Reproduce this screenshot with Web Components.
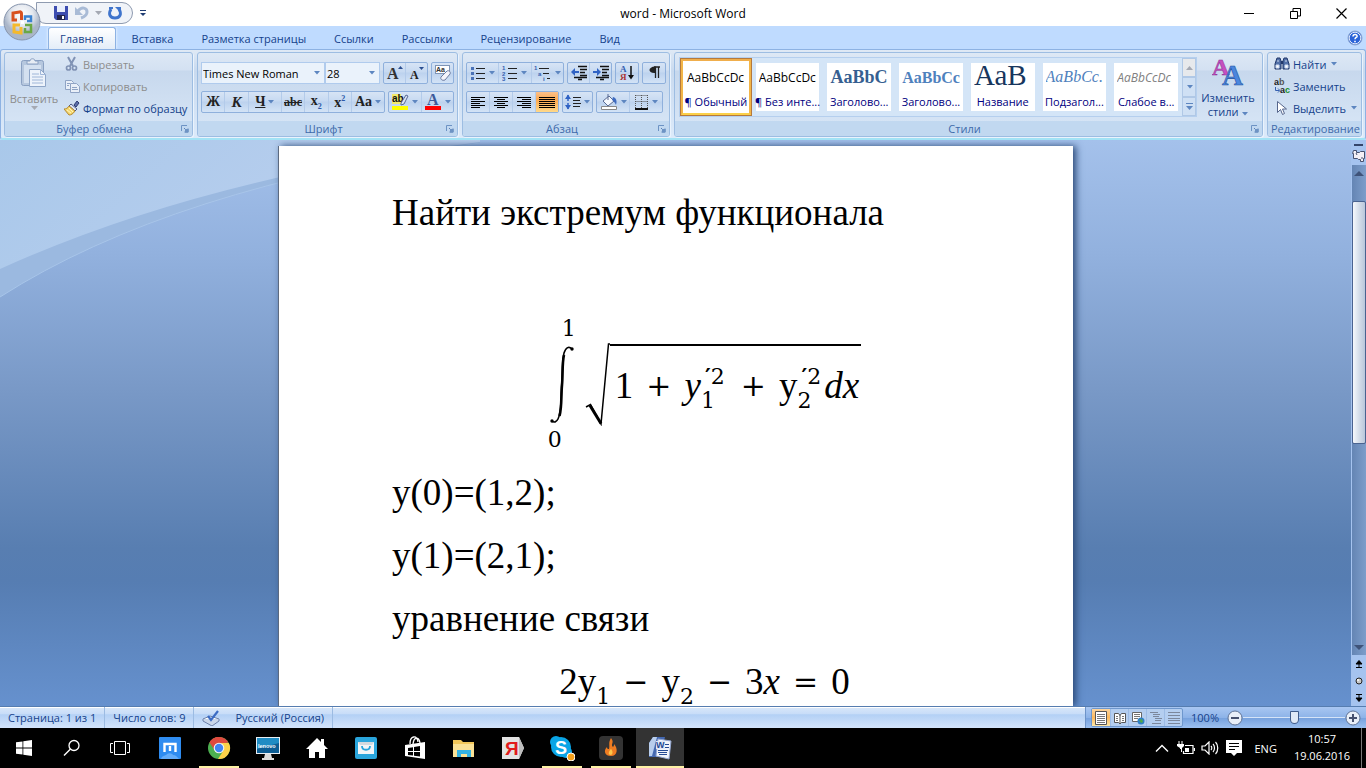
<!DOCTYPE html>
<html lang="ru">
<head>
<meta charset="utf-8">
<title>word - Microsoft Word</title>
<style>
    html, body{
        margin: 0;
        height: 100%;
        overflow: hidden;
    }
    body{
        font-family: "Open Sans", "Noto Sans", sans-serif;
        font-size: 11px;
        color: #15428b;
    }
</style>
</head>
<body>
<word-app></word-app>

<script>
// ---------- icons: [viewBox width, viewBox height, markup] ----------
const LINES = (rows) => rows.map(([x, w], i) => `<path d="M${x} ${i * 2 + 2.5}h${w}" stroke="#000"/>`).join("");

const ICONS = {
    save: [16, 16, `<path d="M1 1h14v14H3l-2-2z" fill="#3d4db0"/><path d="M4 1h8v6H4z" fill="#e8eefc"/><path d="M4 10h8v5H4z" fill="#23264e"/><path d="M9 11h2v3H9z" fill="#fff"/>`],
    undo: [16, 16, `<path d="M4 6c4-5 9-3 9 1 0 3-3 5-6 6" fill="none" stroke="#a9bbd6" stroke-width="3"/><path d="M1 2v8h8z" fill="#a9bbd6"/>`],
    redo: [16, 16, `<path d="M4 4c-3 5-1 9 4 9s7-4 4-9" fill="none" stroke="#3f74cc" stroke-width="3"/><path d="M8 2h6v6z" fill="#3f74cc"/><path d="M2 3h4" stroke="#3f74cc" stroke-width="2"/>`],
    qatMore: [8, 8, `<path d="M1 1.500h6" stroke="#1f3c73"/><path d="M1 4h6l-3 3z" fill="#1f3c73"/>`],
    min: [11, 11, `<path d="M0 5.500h10" stroke="#000"/>`],
    restore: [11, 11, `<path d="M.5 3.500h7v7h-7zM3 3V.5h7.500V8H8" fill="none" stroke="#000"/>`],
    close: [11, 11, `<path d="M.5.5l10 10M10.500.5l-10 10" stroke="#000" stroke-width="1.200"/>`],
    help: [16, 16, `<circle cx="8" cy="8" r="7" fill="#2a63d8" stroke="#8fa7cf"/><circle cx="8" cy="8" r="5.800" fill="none" stroke="#dfe9fb"/><path d="M6 6.500c0-3 4.500-2.500 4 0-.3 1-2 1.200-2 2.800M8 10.700v1.500" fill="none" stroke="#fff" stroke-width="1.600"/>`],
    paste: [28, 32, `<rect x="1.500" y="3.500" width="22" height="25" rx="2" fill="#b6c7de" stroke="#8aa0c2"/><path d="M4 8h17v18H4z" fill="#d4e0f0"/><path d="M7 7V4h3c0-3 5-3 5 0h3v3z" fill="#e7ecf4" stroke="#8aa0c2"/><path d="M9.500 12.500h11l5 5v12h-16z" fill="#edf3fb" stroke="#8fa6c8"/><path d="M20.500 12.500v5h5M12 17h7M12 20h11M12 23h11M12 26h11" fill="none" stroke="#9fb6d8"/>`],
    cut: [16, 16, `<path d="M4 1l5 9M11 1L6 10" stroke="#8193b5" stroke-width="2"/><circle cx="4.500" cy="12" r="2" fill="none" stroke="#8193b5" stroke-width="1.700"/><circle cx="10.500" cy="12" r="2" fill="none" stroke="#8193b5" stroke-width="1.700"/>`],
    copy: [16, 16, `<path d="M1.500 2.500h6l2 2v7h-8z" fill="#e9eff8" stroke="#8fa3c4"/><path d="M6.500 5.500h6l3 3v6h-9z" fill="#e9eff8" stroke="#8fa3c4"/><path d="M3 5.500h3M3 7.500h2M8 9.500h5M8 11.500h6" stroke="#8fa3c4"/>`],
    brush: [16, 16, `<path d="M10 5l3-4 2 2-3 4z" fill="#5d6fa8" stroke="#2d3c75"/><path d="M7 4l6 5-2 2-6-5z" fill="#dfe5f2" stroke="#4a5887"/><path d="M5 6l6 5c-2 3-4 4-6 4L0 9c2 0 4-1 5-3z" fill="#f4d66e" stroke="#b48a33"/><path d="M3 10l4 3M5 8l4 4" stroke="#fff5c0"/>`],
    launcher: [8, 8, `<path d="M.5 6V.5H6" fill="none" stroke="#6d93c4"/><path d="M3 3l4 4M7 3.500V7H3.500" stroke="#5a7fb5" fill="none"/><path d="M4 4h3.500v3.500H4z" fill="#6d93c4"/>`],
    grow: [18, 16, `<text x="1" y="14" font-family="Liberation Serif" font-weight="bold" font-size="16" fill="#333">A</text><path d="M12 4h5l-2.500-3z" fill="#2c4f91"/>`],
    shrink: [18, 16, `<text x="2" y="14" font-family="Liberation Serif" font-weight="bold" font-size="12" fill="#222">A</text><path d="M11 2h5l-2.500 3z" fill="#2c4f91"/>`],
    clear: [18, 18, `<rect x="1.500" y="1.500" width="14" height="8" fill="#fff" stroke="#7e94b5"/><text x="2" y="8" font-family="Liberation Sans" font-size="7" font-weight="bold" fill="#333">Aa</text><path d="M7 13l6-6c2-1 4 1 3 3l-5 6c-3 1-5-1-4-3z" fill="#f4f4fb" stroke="#6c7ba0"/>`],
    mark: [18, 18, `<path d="M1 1h9v10H1z" fill="#f3ea6a"/><text x="1" y="9" font-family="Liberation Sans" font-size="10" fill="#111">ab</text><path d="M10 10l5-8 2 1-4 8-3 1z" fill="#dbe3f4" stroke="#596a93"/><path d="M1 13h16v4H1z" fill="#ffff00"/>`],
    color: [18, 18, `<text x="3" y="12" font-family="Liberation Serif" font-weight="bold" font-size="16" fill="#3c5a9a">A</text><path d="M1 13h16v4H1z" fill="#f00"/>`],
    bullets: [16, 16, `<path d="M1 2h3v3H1zM1 7h3v3H1zM1 12h3v3H1z" fill="#4a72b8"/><path d="M6 3.500h9M6 8.500h9M6 13.500h9" stroke="#222"/>`],
    numbers: [16, 16, `<g font-family="Liberation Sans" font-size="6" font-weight="bold" fill="#3560b0"><text x="0" y="5">1</text><text x="0" y="11">2</text><text x="0" y="16">3</text></g><path d="M6 3.500h9M6 8.500h9M6 13.500h9" stroke="#222"/>`],
    multi: [18, 16, `<g font-family="Liberation Sans" font-size="6" font-weight="bold" fill="#3560b0"><text x="0" y="5">1</text><text x="4" y="11">a</text><text x="9" y="16">i</text></g><path d="M5 3.500h10M9 8.500h6M13 13.500h3" stroke="#222"/>`],
    outdent: [18, 16, `<path d="M8 1.500h9M10 4.500h7M10 7.500h5M10 10.500h7M4 12.500h13M8 14.500h4" stroke="#111" stroke-width="1.500"/><path d="M1 7l4-4v3h4v2H5v3z" fill="#2f62c4"/>`],
    indent: [18, 16, `<path d="M8 1.500h9M10 4.500h7M10 7.500h5M10 10.500h7M4 12.500h13M8 14.500h4" stroke="#111" stroke-width="1.500"/><path d="M9 7L5 3v3H1v2h4v3z" fill="#2f62c4"/>`],
    sort: [16, 16, `<g font-family="Liberation Serif" font-size="9" font-weight="bold"><text x="1" y="7" fill="#3560b0">А</text><text x="1" y="15" fill="#a33">Я</text></g><path d="M12 1v12" stroke="#111" stroke-width="1.500"/><path d="M9 10h6l-3 4.500z" fill="#111"/>`],
    pilcrow: [12, 16, `<path d="M6 2h6M7.500 2v11M10.500 2v11" stroke="#222" stroke-width="1.300"/><path d="M8 1.500C0 1-1 8.500 7 8z" fill="#222"/>`],
    alignL: [16, 14, LINES([[1, 14], [1, 9], [1, 14], [1, 9], [1, 14], [1, 9]])],
    alignC: [16, 14, LINES([[1, 14], [4, 8], [1, 14], [4, 8], [1, 14], [4, 8]])],
    alignR: [16, 14, LINES([[1, 14], [6, 9], [1, 14], [6, 9], [1, 14], [6, 9]])],
    alignJ: [16, 14, LINES([[0, 16], [0, 16], [0, 16], [0, 16], [0, 16], [0, 16]])],
    spacing: [16, 16, `<path d="M3 1v14" stroke="#2f62c4" stroke-width="1.500" stroke-dasharray="6 2"/><path d="M0 5l3-4.500L6 5zM0 11l3 4.500L6 11z" fill="#2f62c4"/><path d="M8 3.500h8M8 6.500h7M8 9.500h8M8 12.500h7" stroke="#222"/>`],
    shade: [18, 18, `<path d="M3 8l6-5 5 5-6 5z" fill="#f5f8fd" stroke="#596a93"/><path d="M8 1v6" stroke="#596a93"/><path d="M13 4c4 1 4 5 3 8-1-2-2-4-4-5z" fill="#3f6cc0"/><path d="M1.500 13.500h15v3h-15z" fill="#fff" stroke="#888"/>`],
    borders: [15, 16, `<path d="M1 14h13v2H1z" fill="#111"/><path d="M1.500 1.500h12M1.500 7.500h12M1.500 1v13M7.500 1v13M13.500 1v13" fill="none" stroke="#555" stroke-dasharray="1 1"/>`],
    styles: [32, 30, `<g font-family="Liberation Serif" font-weight="bold"><text x="0" y="18" font-size="24" fill="#c64fc0" stroke="#8b2f92" stroke-width=".5">A</text><text x="10" y="28" font-size="29" fill="#4b86dd" stroke="#1f4f9f" stroke-width=".6">A</text></g>`],
    find: [16, 16, `<path d="M2 5l1-3h3l1 3v8H1V8zM9 5l1-3h3l1 3 1 3v5H9z" fill="#5270a8" stroke="#22386b"/><path d="M7 5h2v3H7z" fill="#22386b"/><path d="M2 9h3v3H2zM11 9h3v3h-3zM4 4v2M12 4v2" fill="#fff" stroke="#cdd9ef"/>`],
    replace: [18, 16, `<g font-family="Liberation Sans" font-weight="bold" font-size="9"><text x="0" y="7" fill="#222">a<tspan fill="#555">b</tspan></text><text x="6" y="15" fill="#222">a<tspan fill="#1a8f2a">c</tspan></text></g><path d="M1.500 9v3.500h4M4 10.500l2 2-2 2" fill="none" stroke="#3560b0"/>`],
    select: [14, 16, `<path d="M3.500 1.500v11l3-3 2 5 2-1-2-4.500h4z" fill="#fff" stroke="#56668c"/>`],
    up: [7, 4, `<path d="M0 4h7L3.500 0z" fill="#a5a9b3"/>`],
    off: [7, 4, `<path d="M0 0h7L3.500 4z" fill="#a5a9b3"/>`],
    down: [7, 4, `<path d="M1 0h6L4 3.500z" fill="#5d86c0"/>`],
    more: [9, 8, `<path d="M1 1.500h7" stroke="#5d86c0"/><path d="M1 4h7L4.500 8z" fill="#5d86c0"/>`],
    sbUp: [10, 5, `<path d="M0 5h10L5 0z" fill="#3f5379"/>`],
    sbDown: [10, 5, `<path d="M0 0h10L5 5z" fill="#3f5379"/>`],
    ruler: [14, 14, `<path d="M1.500 1.500h3v2h3l1-1h4v7h-1v3h-3v-2h-2l-1-1h-4v-5h-1z" fill="#f4f0f6" stroke="#47516e"/><path d="M4 4l1 2M9 9h2" stroke="#47516e"/>`],
    prev: [8, 8, `<path d="M1 4l3-3.500L7 4zM1 7.500h6M4 4v4" fill="#000" stroke="#000"/>`],
    ball: [10, 10, `<circle cx="5" cy="5" r="3" fill="#c9c9c9" stroke="#222"/><circle cx="4" cy="4" r="1" fill="#fff"/>`],
    next: [8, 8, `<path d="M1 4l3 3.500L7 4zM1 .5h6M4 0v4" fill="#000" stroke="#000"/>`],
    proof: [18, 16, `<path d="M1 9l7-3 9 3-7 5z" fill="#fff" stroke="#6b7fa8"/><path d="M1 9v2l9 5 7-5V9" fill="#c9d6ea" stroke="#6b7fa8"/><path d="M6 6l3 4 7-9" fill="none" stroke="#3c6cc4" stroke-width="2.200"/>`],
    vPrint: [14, 14, `<path d="M1.500.5h11v13h-11z" fill="#fff" stroke="#555"/><path d="M3 3.500h8M3 5.500h8M3 7.500h8M3 9.500h8M3 11.500h8" stroke="#777"/>`],
    vRead: [14, 14, `<path d="M1.500 2.500h4l1.500 2 1.500-2h4v9h-4L7 13l-1.500-1.500h-4zM7 4v9" fill="#fff" stroke="#555"/><path d="M3 5.500h2M3 7.500h2M3 9.500h2M9 5.500h2M9 7.500h2M9 9.500h2" stroke="#777"/>`],
    vWeb: [14, 14, `<path d="M1.500 1.500h9v9h-9z" fill="#fff" stroke="#666"/><path d="M3 3.500h6M3 5.500h6M3 7.500h4" stroke="#777"/><circle cx="10" cy="10" r="3.500" fill="#2f7fc8"/><path d="M8 9l3-1 1 3-2 1z" fill="#4fa84a"/>`],
    vOutline: [14, 14, `<path d="M1 1.500h8M4 3.500h7M4 5.500h6M6 7.500h7M6 9.500h6M3 12.500h9" stroke="#7b879c"/>`],
    vDraft: [14, 14, `<path d="M1 1.500h12M1 4.500h12M1 7.500h12M1 9.500h12M1 12.500h12" stroke="#7b879c"/>`],
    minus: [16, 16, `<circle cx="8" cy="8" r="7" fill="#e9eff8" stroke="#5f7396"/><path d="M4 8h8" stroke="#47516e" stroke-width="2"/>`],
    plus: [16, 16, `<circle cx="8" cy="8" r="7" fill="#e9eff8" stroke="#5f7396"/><path d="M4 8h8M8 4v8" stroke="#47516e" stroke-width="2"/>`],
    office: [38, 38, `<defs><radialGradient id="g" cy=".3"><stop offset="0" stop-color="#fff"/><stop offset=".6" stop-color="#e4e8ef"/><stop offset="1" stop-color="#aab6c9"/></radialGradient></defs><circle cx="19" cy="19" r="18" fill="url(#g)" stroke="#8795ad"/><g fill="none" stroke-width="3"><path d="M18.500 17V10.500c0-1-1-2-2-1.500L10 10v7h4" stroke="#d8501f"/><path d="M22 17v-3.500h6V18h-4" stroke="#3b82d0" stroke-width="2.500"/><path d="M17 22h-6v7l7 1v-6" stroke="#f5b92c"/><path d="M22 22h6v7h-6v-4" stroke="#6aa844" stroke-width="2.500"/></g><path d="M18 18h3v3h-3z" fill="#fff"/>`],
    win: [16, 16, `<path d="M0 2.300l6.500-.9v6.200H0zM7.300 1.300L16 0v7.600H7.300zM0 8.400h6.500v6.200L0 13.700zM7.300 8.400H16V16l-8.700-1.300z" fill="#fff"/>`],
    search: [18, 18, `<circle cx="11" cy="6.500" r="5" fill="none" stroke="#fff" stroke-width="1.300"/><path d="M7.500 10L1 16.500" stroke="#fff" stroke-width="1.500"/>`],
    tasks: [20, 16, `<path d="M4.500 1.500h11v13h-11zM3 3.500H.5v9H3M17 3.500h2.500v9H17" fill="none" stroke="#fff"/>`],
    maxthon: [22, 24, `<rect y="1" width="22" height="22" rx="1" fill="#2f8cf0"/><path d="M2 23c1-4 5-3 6-5 3-2 6 0 6 1 3 0 4 2 6 4z" fill="#64adfa"/><path d="M5.500 16V8h11v8M11 10v5" fill="none" stroke="#fff" stroke-width="2.400"/>`],
    chrome: [24, 24, `<circle cx="12" cy="12" r="11" fill="#4caf50"/><path d="M2.500 6.500A11 11 0 0 1 21.500 6.500L12 8z" fill="#e04a3f"/><path d="M2.500 6.500A11 11 0 0 1 12 1v6.500L7.500 14z" fill="#e04a3f"/><path d="M21.800 7A11 11 0 0 1 11 23l5.500-8.500L14 7z" fill="#fdd24a"/><circle cx="12" cy="12" r="5.300" fill="#f4f4f4"/><circle cx="12" cy="12" r="4.200" fill="#4285f4"/>`],
    lenovo: [24, 24, `<path d="M0 1h24v17H0z" fill="#e8eef3"/><path d="M1 2h22v15H1z" fill="#0c5d94"/><path d="M1 2h22v5L1 13z" fill="#1f8cc4"/><text x="2" y="12" font-family="Liberation Sans" font-weight="bold" font-size="5.500" fill="#fff">lenovo</text><path d="M9 18h6l1 4h2v2H6v-2h2z" fill="#dcdcdc"/>`],
    home: [24, 22, `<path d="M12 1L1 12h3v9h6v-6h4v6h6v-9h3l-4-4V2h-3v3z" fill="#fff"/>`],
    bag: [22, 24, `<rect y="1" width="22" height="22" rx="2" fill="#2aa5dc"/><path d="M3 6h16v12H3z" fill="#f3f5f7"/><path d="M3 6h16l-2 3H5z" fill="#d4d9de"/><path d="M7 10c0 5 8 5 8 0" fill="none" stroke="#2aa5dc" stroke-width="1.800"/>`],
    store: [22, 24, `<path d="M1 9l20-3v17L1 20z" fill="#fff"/><path d="M6 8c0-9 7-9 8-2M9 8c1-8 6-7 7-1" fill="none" stroke="#fff" stroke-width="1.300"/><path d="M4 12l5-.7V15H4zM10 11l6-.9V15h-6zM4 16h5v3.500l-5-.5zM10 16h6v4.500l-6-.8z" fill="#000"/>`],
    folder: [24, 20, `<path d="M1 2h8l2 2h11v15H1z" fill="#f2c75a"/><path d="M1 6h21v13H1z" fill="#fbe296"/><path d="M5 19v-7h14v7h-4v-3h-6v3z" fill="#35b3e3"/>`],
    yandex: [24, 24, `<path d="M1 1h17l5 11-5 11H1z" fill="#e3e3e3"/><path d="M18 1l5 11-5 11z" fill="#bdbdbd"/><text x="4" y="19" font-family="Liberation Sans" font-weight="bold" font-size="19" fill="#e11b1b">Я</text>`],
    skype: [26, 26, `<circle cx="7" cy="7" r="6" fill="#0aa5e6"/><circle cx="17" cy="17" r="6" fill="#0aa5e6"/><circle cx="12" cy="12" r="10" fill="#0aa5e6"/><text x="6" y="19" font-family="Liberation Sans" font-weight="bold" font-size="18" fill="#fff">S</text><circle cx="22" cy="22" r="4" fill="#f6a01a" stroke="#fff"/>`],
    fire: [24, 24, `<rect width="24" height="24" rx="4" fill="#333"/><path d="M12 2c4 5-1 6 2 9 1-1 1-2 1-3 4 4 4 12-3 12-6 0-8-5-4-9 0 2 1 2 2 2 1-4-1-6 2-11z" fill="#ee7c22"/><path d="M12 13c2 2 2 5 0 6-3 0-3-3 0-6z" fill="#fcc64a"/>`],
    word: [24, 24, `<path d="M5 1h12L12 21H1V7z" fill="#4468b0"/><path d="M5 1h4L4 20H1V7z" fill="#b8cdec"/><path d="M10 3l13 2-2 18-13-3z" fill="#f1f4fb" stroke="#93a6cf"/><path d="M8 5h9v8H8z" fill="#dfe7f6"/><text x="8" y="12" font-family="Liberation Sans" font-weight="bold" font-size="9" fill="#254a94">W</text><path d="M10 14.500h10M10 16.500h9M11 18.500h8M17 8.500h4M17 11.500h4" stroke="#254a94"/>`],
    trayUp: [14, 8, `<path d="M1 7.500l6-6 6 6" fill="none" stroke="#fff" stroke-width="1.400"/>`],
    battery: [18, 14, `<path d="M8 4.500h8v8H6.500V10M17.500 7v3" fill="none" stroke="#fff" stroke-width="1.200"/><path d="M8 7h4v4H8z" fill="#fff"/><path d="M2 0v3M5 0v3" stroke="#fff"/><path d="M0 3h7v2L5 7v4H4V8H3V7L0 5z" fill="#fff"/>`],
    sound: [18, 14, `<path d="M1 5h3l4-4v12L4 9H1z" fill="none" stroke="#fff" stroke-width="1.200"/><path d="M10 5c1 1 1 3 0 4M12 3c2 2 2 6 0 8M14.500 1c3 3 3 9 0 12" fill="none" stroke="#fff" stroke-width="1.200"/>`],
    note: [16, 16, `<path d="M0 0h16v13h-5l-3 3-3-3H0z" fill="#fff"/><path d="M3 3.500h10M3 6.500h10M3 9.500h6" stroke="#000"/>`],
    integral: [24, 80, `<path d="M22 4c-3-3-6-2-8 4-1 4-1.500 8-1.500 14L11 56c-.3 8-1 14-3 18-1.500 3-4 4-6 2" fill="none" stroke="#000" stroke-width="1.600"/><path d="M14 10c-2 8-1 20-2 30s0 22-2.500 31" fill="none" stroke="#000" stroke-width="2.600"/><circle cx="22" cy="4" r="1.700"/><circle cx="2" cy="76" r="1.700"/>`],
    radical: [25, 83, `<path d="M1 64l4.500-2.500L16 81 23.500 1H25" fill="none" stroke="#000" stroke-width="1.500"/><path d="M5 62.500l11 18" stroke="#000" stroke-width="3"/>`],
};

class UiIcon extends HTMLElement{
    constructor(){
        super();
        this.attachShadow({mode: "open"});
    }

    connectedCallback(){
        const [w, h, markup] = ICONS[this.getAttribute("name")];
        this.shadowRoot.innerHTML = `
        <style>
        :host{ display: inline-flex; flex: none; }
        svg{ display: block; }
        </style>
        <svg width="${w}" height="${h}" viewBox="0 0 ${w} ${h}" aria-hidden="true">${markup}</svg>
        `;
    }
}

// one segment of a button strip; "drop" adds the small arrow, "on" is the pressed look
class ToolButton extends HTMLElement{
    constructor(){
        super();
        this.attachShadow({mode: "open"});
    }

    connectedCallback(){
        const icon = this.getAttribute("icon");
        this.shadowRoot.innerHTML = `
        <style>
        :host{ display: flex; flex: 1 1 23px; }
        :host([drop]){ flex-basis: 33px; }
        :host(:not(:first-child)){ border-left: 1px solid #b3cbea; }
        :host([on]) button{ background: linear-gradient(#fbc08a, #fda94f 40%, #ffd98a); }
        button{
            display: flex;
            flex: 1;
            align-items: center;
            justify-content: center;
            gap: 2px;
            border: 0;
            padding: 0;
            background: none;
            color: #222;
            font: bold 14px "Liberation Serif", serif;
        }
        ::slotted(i){ font-size: 15px; }
        </style>
        <button type="button" aria-label="${this.getAttribute("label")}">
            ${icon ? `<ui-icon name="${icon}"></ui-icon>` : `<span><slot></slot></span>`}
            ${this.hasAttribute("drop") ? `<ui-icon name="down"></ui-icon>` : ""}
        </button>
        `;
    }
}

class ToolStrip extends HTMLElement{
    constructor(){
        super();
        this.attachShadow({mode: "open"}).innerHTML = `
        <style>
        :host{
            display: flex;
            box-sizing: border-box;
            height: 22px;
            border: 1px solid #8fb0dc;
            border-radius: 2px;
            background: linear-gradient(#d7e4f5, #c6d9f1 45%, #bcd2ee 50%, #d3e3f6);
        }
        </style>
        <slot></slot>
        `;
    }
}

// icon + caption in one line, used in the first and the last group
class SmallCommand extends HTMLElement{
    constructor(){
        super();
        this.attachShadow({mode: "open"});
    }

    connectedCallback(){
        const off = this.hasAttribute("off");
        this.shadowRoot.innerHTML = `
        <style>
        :host{ display: flex; height: 22px; }
        button{
            display: flex;
            align-items: center;
            border: 0;
            padding: 0;
            background: none;
            color: ${off ? "#8d8d8d" : "#15428b"};
            font: inherit;
            white-space: nowrap;
        }
        .ico{ display: flex; width: 19px; }
        .arrow{ margin-left: 4px; }
        </style>
        <button type="button" ${off ? "disabled" : ""}>
            <span class="ico"><ui-icon name="${this.getAttribute("icon")}"></ui-icon></span>
            <slot></slot>
            ${this.hasAttribute("drop") ? `<ui-icon class="arrow" name="down"></ui-icon>` : ""}
        </button>
        `;
    }
}

class RibbonGroup extends HTMLElement{
    constructor(){
        super();
        this.attachShadow({mode: "open"});
    }

    connectedCallback(){
        this.shadowRoot.innerHTML = `
        <style>
        :host{
            display: flex;
            flex-direction: column;
            box-sizing: border-box;
            height: 85px;
            border: 1px solid #9dbde2;
            border-radius: 3px;
            box-shadow: 1px 1px 0 #eaf3fd;
            background: linear-gradient(#dde8f5, #d4e1f2 20%, #c7d8ed 22%, #d9e7f7 100%);
            overflow: hidden;
        }
        .body{ display: flex; flex: 1; padding: 0 3px; min-height: 0; }
        .caption{
            display: flex;
            align-items: center;
            height: 15px;
            background: #c1d8f0;
            color: #3e6aaa;
            padding: 0 3px;
            white-space: nowrap;
        }
        .caption span{ flex: 1; text-align: center; line-height: 15px; }
        </style>
        <div class="body"><slot></slot></div>
        <div class="caption"><span>${this.getAttribute("caption")}</span>${this.hasAttribute("launcher") ? `<ui-icon name="launcher"></ui-icon>` : ""}</div>
        `;
    }
}

class StyleCard extends HTMLElement{
    constructor(){
        super();
        this.attachShadow({mode: "open"});
    }

    connectedCallback(){
        this.shadowRoot.innerHTML = `
        <style>
        :host{ display: flex; flex: 1 1 72px; min-width: 0; }
        button{
            display: flex;
            flex: 1;
            flex-direction: column;
            align-items: center;
            justify-content: center;
            min-width: 0;
            margin: 0;
            border: 3px solid transparent;
            padding: 2px 1px;
            background: #fff content-box;
            color: #000080;
            font: inherit;
        }
        :host([on]) button{ border-color: #f0ae4c #f2b548 #fbd048; background-clip: padding-box; outline: 1px solid #b5793c; outline-offset: -1px; }
        .sample{
            display: flex;
            align-items: center;
            box-sizing: border-box;
            width: 100%;
            height: 30px;
            padding: 0 3px;
            color: #000;
        }
        .clip{ overflow: hidden; white-space: nowrap; line-height: 28px; }
        .name{ height: 18px; line-height: 17px; white-space: nowrap; }
        </style>
        <button type="button">
            <span class="sample"><span class="clip"><slot></slot></span></span>
            <span class="name">${this.getAttribute("name")}</span>
        </button>
        `;
    }
}

class TitleBar extends HTMLElement{
    constructor(){
        super();
        this.attachShadow({mode: "open"}).innerHTML = `
        <style>
        :host{
            display: grid;
            grid-template-columns: 1fr auto 1fr;
            align-items: center;
            height: 26px;
            background: #fff;
            position: relative;
        }
        button{ border: 0; padding: 0; background: none; display: flex; align-items: center; justify-content: center; }
        .left{ display: flex; align-items: center; gap: 6px; padding-left: 36px; }
        .qat{
            display: flex;
            align-items: center;
            box-sizing: border-box;
            width: 97px;
            height: 22px;
            padding-left: 16px;
            gap: 5px;
            border: 1px solid #8f9bb0;
            border-radius: 0 11px 11px 10px;
            background: #f0f3f8;
        }
        .title{ color: #000; font-size: 12px; }
        .win{ display: flex; justify-content: flex-end; padding-right: 2px; }
        .win button{ width: 46px; height: 24px; }
        /* the round button hangs over the tab row */
        .office{ position: absolute; left: 3px; top: 3px; z-index: 2; }
        </style>
        <div class="left">
            <div class="qat">
                <button type="button" aria-label="Сохранить"><ui-icon name="save"></ui-icon></button>
                <button type="button" aria-label="Отменить"><ui-icon name="undo"></ui-icon></button>
                <ui-icon name="off"></ui-icon>
                <button type="button" aria-label="Повторить"><ui-icon name="redo"></ui-icon></button>
            </div>
            <button type="button" aria-label="Настройка панели"><ui-icon name="qatMore"></ui-icon></button>
        </div>
        <div class="title">word - Microsoft Word</div>
        <div class="win">
            <button type="button" aria-label="Свернуть"><ui-icon name="min"></ui-icon></button>
            <button type="button" aria-label="Восстановить"><ui-icon name="restore"></ui-icon></button>
            <button type="button" aria-label="Закрыть"><ui-icon name="close"></ui-icon></button>
        </div>
        <button type="button" class="office" aria-label="Office"><ui-icon name="office"></ui-icon></button>
        `;
    }
}

class RibbonTabs extends HTMLElement{
    tabs = ["Главная", "Вставка", "Разметка страницы", "Ссылки", "Рассылки", "Рецензирование", "Вид"];

    constructor(){
        super();
        this.attachShadow({mode: "open"});
    }

    connectedCallback(){
        this.shadowRoot.innerHTML = `
        <style>
        :host{
            display: flex;
            align-items: flex-end;
            height: 23px;
            padding: 0 3px 0 48px;
            background: #bfdbff;
        }
        nav{ display: flex; flex: 1; gap: 4px; }
        button{
            box-sizing: border-box;
            height: 22px;
            border: 1px solid transparent;
            border-bottom: 0;
            border-radius: 3px 3px 0 0;
            padding: 0 11px;
            background: none;
            color: #15428b;
            font: inherit;
            line-height: 21px;
        }
        .on{ border-color: #8db2e3; background: linear-gradient(#fff, #e3edf8); box-shadow: 0 0 3px #fff; }
        .help{ padding: 0; border: 0; display: flex; align-items: center; }
        </style>
        <nav>${this.tabs.map((t, i) => `<button type="button" class="${i ? "" : "on"}">${t}</button>`).join("")}</nav>
        <button type="button" class="help" aria-label="Справка"><ui-icon name="help"></ui-icon></button>
        `;
    }
}

class WordRibbon extends HTMLElement{
    constructor(){
        super();
        this.attachShadow({mode: "open"}).innerHTML = `
        <style>
        :host{
            display: flex;
            gap: 4px;
            box-sizing: border-box;
            height: 91px;
            padding: 2px 3px;
            border: 1px solid #8db2e3;
            border-bottom: 2px solid #a3e3f5;
            border-radius: 3px;
            background: linear-gradient(#dfe9f5, #c9daef 24%, #dceafa);
        }
        .clip{ flex: 0 0 189px; }
        .font{ flex: 0 0 261px; }
        .para{ flex: 0 0 208px; }
        .styles{ flex: 1; min-width: 0; }
        .edit{ flex: 0 0 95px; }
        .rows{ display: flex; flex: 1; flex-direction: column; justify-content: center; gap: 7px; padding-top: 1px; }
        .row{ display: flex; gap: 3px; }
        .list{ display: flex; flex-direction: column; }
        .big{
            display: flex;
            flex-direction: column;
            align-items: center;
            border: 0;
            padding: 4px 0 0;
            background: none;
            color: #15428b;
            font: inherit;
            line-height: 14px;
        }
        .big:disabled{ color: #8d8d8d; }
        .paste{ width: 52px; margin-right: 4px; }
        .paste ui-icon:first-child{ margin-bottom: 3px; }
        .change{ flex: 0 0 62px; }
        .change ui-icon:first-child{ margin-bottom: 4px; }
        .combo{
            display: flex;
            align-items: center;
            box-sizing: border-box;
            height: 22px;
            border: 1px solid #b0cbed;
            padding: 0 4px 0 1px;
            background: #eaf2fb;
        }
        .face{ flex: 0 0 124px; }
        .size{ flex: 0 0 55px; margin-left: -3px; }
        select{
            appearance: none;
            flex: 1;
            min-width: 0;
            border: 0;
            padding: 0;
            background: none;
            color: #000;
            font: inherit;
        }
        .aa{ flex: 0 0 45px; }
        .one{ flex: 1 1 24px; }
        .gallery{
            display: flex;
            flex: 1;
            min-width: 0;
            box-sizing: border-box;
            height: 60px;
            margin: 4px 0 0 1px;
            border: 1px solid #b5cfee;
            background: #d4e5f7;
        }
        .scroll{ display: flex; flex-direction: column; flex: none; width: 14px; }
        .scroll button{
            display: flex;
            flex: 1;
            align-items: center;
            justify-content: center;
            border: 1px solid #b0c8e6;
            padding: 0;
            background: #cfe0f4;
        }
        .scroll button:first-child{ background: #e7e9ec; }
        .edit .list{ padding-left: 3px; }
        .plain{ font-size: 12px; }
        .cambria{ font-family: "Liberation Serif", serif; font-weight: bold; font-size: 18px; color: #365f91; }
        .h2{ font-size: 16px; color: #4f81bd; }
        .ttl{ font: 29px "Liberation Serif", serif; line-height: 28px; color: #17365d; }
        .sub{ font: italic 16px "Liberation Serif", serif; color: #4f81bd; }
        .weak{ font-size: 12px; font-style: italic; color: #808080; }
        small{ font-size: 8px; color: #2c58a8; vertical-align: sub; }
        small.sup{ vertical-align: super; }
        s{ font-size: 12px; }
        </style>

        <ribbon-group class="clip" caption="Буфер обмена" launcher>
            <button type="button" class="big paste" disabled>
                <ui-icon name="paste"></ui-icon>Вставить<ui-icon name="off"></ui-icon>
            </button>
            <div class="list">
                <small-command icon="cut" off>Вырезать</small-command>
                <small-command icon="copy" off>Копировать</small-command>
                <small-command icon="brush">Формат по образцу</small-command>
            </div>
        </ribbon-group>

        <ribbon-group class="font" caption="Шрифт" launcher>
            <div class="rows">
                <div class="row">
                    <span class="combo face"><select aria-label="Шрифт"><option>Times New Roman</option></select><ui-icon name="down"></ui-icon></span>
                    <span class="combo size"><select aria-label="Размер"><option>28</option></select><ui-icon name="down"></ui-icon></span>
                    <tool-strip class="aa">
                        <tool-button icon="grow" label="Увеличить"></tool-button>
                        <tool-button icon="shrink" label="Уменьшить"></tool-button>
                    </tool-strip>
                    <tool-strip class="one"><tool-button icon="clear" label="Очистить формат"></tool-button></tool-strip>
                </div>
                <div class="row">
                    <tool-strip style="flex: 0 0 184px">
                        <tool-button label="Полужирный">Ж</tool-button>
                        <tool-button label="Курсив"><i>К</i></tool-button>
                        <tool-button label="Подчеркнутый" drop><u>Ч</u></tool-button>
                        <tool-button label="Зачеркнутый"><s>abc</s></tool-button>
                        <tool-button label="Подстрочный">x<small>2</small></tool-button>
                        <tool-button label="Надстрочный">x<small class="sup">2</small></tool-button>
                        <tool-button label="Регистр" drop>Aa</tool-button>
                    </tool-strip>
                    <tool-strip class="one">
                        <tool-button icon="mark" label="Выделение" drop></tool-button>
                        <tool-button icon="color" label="Цвет текста" drop></tool-button>
                    </tool-strip>
                </div>
            </div>
        </ribbon-group>

        <ribbon-group class="para" caption="Абзац" launcher>
            <div class="rows">
                <div class="row">
                    <tool-strip style="flex: 0 0 98px">
                        <tool-button icon="bullets" label="Маркеры" drop></tool-button>
                        <tool-button icon="numbers" label="Нумерация" drop></tool-button>
                        <tool-button icon="multi" label="Многоуровневый список" drop></tool-button>
                    </tool-strip>
                    <tool-strip style="flex: 0 0 45px">
                        <tool-button icon="outdent" label="Уменьшить отступ"></tool-button>
                        <tool-button icon="indent" label="Увеличить отступ"></tool-button>
                    </tool-strip>
                    <tool-strip class="one"><tool-button icon="sort" label="Сортировка"></tool-button></tool-strip>
                    <tool-strip class="one"><tool-button icon="pilcrow" label="Знаки абзаца"></tool-button></tool-strip>
                </div>
                <div class="row">
                    <tool-strip style="flex: 0 0 93px">
                        <tool-button icon="alignL" label="По левому краю"></tool-button>
                        <tool-button icon="alignC" label="По центру"></tool-button>
                        <tool-button icon="alignR" label="По правому краю"></tool-button>
                        <tool-button icon="alignJ" label="По ширине" on></tool-button>
                    </tool-strip>
                    <tool-strip style="flex: 0 0 31px"><tool-button icon="spacing" label="Интервал" drop></tool-button></tool-strip>
                    <tool-strip style="flex: 0 0 67px">
                        <tool-button icon="shade" label="Заливка" drop></tool-button>
                        <tool-button icon="borders" label="Границы" drop></tool-button>
                    </tool-strip>
                </div>
            </div>
        </ribbon-group>

        <ribbon-group class="styles" caption="Стили" launcher>
            <div class="gallery">
                <style-card name="¶ Обычный" on><span class="plain">AaBbCcDc</span></style-card>
                <style-card name="¶ Без инте..."><span class="plain">AaBbCcDc</span></style-card>
                <style-card name="Заголово..."><span class="cambria">AaBbC</span></style-card>
                <style-card name="Заголово..."><span class="cambria h2">AaBbCc</span></style-card>
                <style-card name="Название"><span class="ttl">АаВ</span></style-card>
                <style-card name="Подзагол..."><span class="sub">AaBbCc.</span></style-card>
                <style-card name="Слабое в..."><span class="weak">AaBbCcDc</span></style-card>
                <div class="scroll">
                    <button type="button" aria-label="Вверх"><ui-icon name="up"></ui-icon></button>
                    <button type="button" aria-label="Вниз"><ui-icon name="down"></ui-icon></button>
                    <button type="button" aria-label="Все стили"><ui-icon name="more"></ui-icon></button>
                </div>
            </div>
            <button type="button" class="big change">
                <ui-icon name="styles"></ui-icon>Изменить<span>стили <ui-icon name="down"></ui-icon></span>
            </button>
        </ribbon-group>

        <ribbon-group class="edit" caption="Редактирование">
            <div class="list">
                <small-command icon="find" drop>Найти</small-command>
                <small-command icon="replace">Заменить</small-command>
                <small-command icon="select" drop>Выделить</small-command>
            </div>
        </ribbon-group>
        `;
    }
}

class DocPage extends HTMLElement{
    constructor(){
        super();
        this.attachShadow({mode: "open"}).innerHTML = `
        <style>
        :host{
            display: block;
            box-sizing: border-box;
            width: 795px;
            padding: 35px 56px 0 113px;
            border-left: 1px solid #5c6a80;
            background: #fff;
            box-shadow: 3px 0 7px #2c4a78;
            color: #000;
            font: 37px/63px "Liberation Serif", "Times New Roman", serif;
        }
        p{ margin: 0; min-height: 63px; white-space: nowrap; }
        .eq{ display: flex; align-items: center; justify-content: center; white-space: nowrap; }
        .main{ padding: 10px 0 9px; }
        .limits, .idx, sub, .op{ font-family: "DejaVu Serif", serif; font-size: 22px; line-height: 24px; }
        .limits{ display: flex; flex-direction: column; width: 28px; }
        .limits span:first-child{ text-align: right; }
        .limits ui-icon{ align-self: center; margin: 4px 0 3px; }
        .root{ margin-left: 9px; }
        .under{ border-top: 2px solid #000; padding: 0 2px 0 5px; line-height: 79px; }
        .op{ margin: 0 13px; font-size: 30px; vertical-align: 2px; }
        .idx{
            display: inline-flex;
            flex-direction: column;
            vertical-align: 14px;
            margin-right: 3px;
        }
        .idx span:first-child{ padding-left: 4px; }
        sub{ vertical-align: -10px; }
        </style>
        <p>Найти экстремум функционала</p>
        <p></p>
        <div class="eq main">
            <div class="limits"><span>1</span><ui-icon name="integral"></ui-icon><span>0</span></div>
            <ui-icon class="root" name="radical"></ui-icon>
            <div class="under">1<span class="op">+</span><i>y</i><span class="idx"><span><b>′</b>2</span><span>1</span></span><span class="op">+</span>y<span class="idx"><span><b>′</b>2</span><span>2</span></span><i>dx</i></div>
        </div>
        <p>у(0)=(1,2);</p>
        <p>у(1)=(2,1);</p>
        <p>уравнение связи</p>
        <div class="eq"><div>2y<sub>1</sub><span class="op">−</span>y<sub>2</sub><span class="op">−</span>3<i>x</i><span class="op">=</span>0</div></div>
        `;
    }
}

class WorkSpace extends HTMLElement{
    constructor(){
        super();
        this.attachShadow({mode: "open"}).innerHTML = `
        <style>
        :host{ display: flex; flex: 1; min-height: 0; background: #a5c3ef; }
        .desk{
            display: grid;
            flex: 1;
            grid-template: 100% / 100%;
            min-width: 0;
            overflow: hidden;
            background: linear-gradient(#a4c1eb, #92b1de 20%, #7898c6 45%, #587eb1 72%, #567db2 78%, #6691ce);
        }
        .desk > *{ grid-area: 1 / 1; }
        .swoosh{ display: block; }
        doc-page{ justify-self: center; margin-top: 6px; overflow: hidden; }
        .bar{ display: flex; flex-direction: column; align-items: center; width: 15px; padding-top: 4px; box-sizing: border-box; }
        .split{ width: 9px; height: 2px; background: #34456a; }
        .bar button{ display: flex; align-items: center; justify-content: center; width: 14px; border: 0; padding: 0; background: none; }
        .rule{ height: 19px; }
        .track{ display: flex; flex: 1; flex-direction: column; width: 14px; background: linear-gradient(90deg, #6485b4, #7d9dca); }
        .arrow{ height: 16px; }
        .gap{ flex: 20; }
        .thumb{
            flex: 243;
            border: 1px solid #4a6390;
            border-radius: 2px;
            background: linear-gradient(90deg, #f5f8fc, #d5deea 50%, #b9c7db);
        }
        .rest{ flex: 197; }
        .pager{ height: 17px; }
        </style>
        <div class="desk">
            <svg class="swoosh" width="480" height="240" viewBox="0 0 480 240" aria-hidden="true">
                <defs><linearGradient id="s" x2="1" y2=".3"><stop offset="0" stop-color="#a9c8ea"/><stop offset="1" stop-color="#bcd0ef"/></linearGradient></defs>
                <path d="M0 0h480v3Q170 48 0 157z" fill="#9bb9e0"/>
                <path d="M0 0h480v2Q200 38 0 129z" fill="url(#s)"/>
                <path d="M0 157Q170 48 480 3" fill="none" stroke="#a8c5e9"/>
            </svg>
            <doc-page></doc-page>
        </div>
        <div class="bar">
            <span class="split"></span>
            <button type="button" class="rule" aria-label="Линейка"><ui-icon name="ruler"></ui-icon></button>
            <div class="track">
                <button type="button" class="arrow" aria-label="Вверх"><ui-icon name="sbUp"></ui-icon></button>
                <span class="gap"></span><span class="thumb"></span><span class="rest"></span>
                <button type="button" class="arrow" aria-label="Вниз"><ui-icon name="sbDown"></ui-icon></button>
            </div>
            <button type="button" class="pager" aria-label="Предыдущая"><ui-icon name="prev"></ui-icon></button>
            <button type="button" class="pager" aria-label="Объект перехода"><ui-icon name="ball"></ui-icon></button>
            <button type="button" class="pager" aria-label="Следующая"><ui-icon name="next"></ui-icon></button>
        </div>
        `;
    }
}

class StatusBar extends HTMLElement{
    constructor(){
        super();
        this.attachShadow({mode: "open"}).innerHTML = `
        <style>
        :host{
            display: flex;
            box-sizing: border-box;
            height: 22px;
            border-top: 1px solid #567db0;
            background: linear-gradient(#fff 1px, #d7e6f9 1px, #c7dcf8 35%, #b3d0f5 36%, #d3e4fb);
        }
        .cell{ display: flex; align-items: center; gap: 15px; padding: 0 8px; border-right: 1px solid #9cbbe2; }
        .fill{ flex: 1; }
        .right{
            display: flex;
            align-items: center;
            gap: 8px;
            padding: 0 5px;
            border-left: 1px solid #6d93c8;
            background: linear-gradient(#a9c7f2, #8db3e8 50%, #76a1dd 52%, #9cc0f0);
        }
        .views{ display: flex; border: 1px solid #6e97cd; border-radius: 2px; background: #b4cef0; }
        button{ display: flex; align-items: center; justify-content: center; border: 0; padding: 0; background: none; }
        .views button{ width: 18px; height: 17px; }
        .views button + button{ border-left: 1px solid #9dbce6; }
        .views .on{ background: linear-gradient(#fbd5a0, #fdb95c 50%, #ffe9a8); }
        .zoom{ display: flex; align-items: center; }
        input{ appearance: none; width: 102px; height: 16px; margin: 0; background: linear-gradient(#d5e4f8, #d5e4f8) center / 100% 1px no-repeat; }
        input::-webkit-slider-thumb{
            appearance: none;
            width: 9px;
            height: 13px;
            border: 1px solid #3f5c8c;
            border-radius: 1px 1px 5px 5px;
            background: #dfe9f7;
        }
        </style>
        <div class="cell">Страница: 1 из 1</div>
        <div class="cell">Число слов: 9</div>
        <div class="cell"><ui-icon name="proof"></ui-icon>Русский (Россия)</div>
        <div class="fill"></div>
        <div class="right">
            <div class="views">
                <button type="button" class="on" aria-label="Разметка"><ui-icon name="vPrint"></ui-icon></button>
                <button type="button" aria-label="Чтение"><ui-icon name="vRead"></ui-icon></button>
                <button type="button" aria-label="Веб-документ"><ui-icon name="vWeb"></ui-icon></button>
                <button type="button" aria-label="Структура"><ui-icon name="vOutline"></ui-icon></button>
                <button type="button" aria-label="Черновик"><ui-icon name="vDraft"></ui-icon></button>
            </div>
            <span>100%</span>
            <div class="zoom">
                <button type="button" aria-label="Уменьшить"><ui-icon name="minus"></ui-icon></button>
                <input type="range" min="0" max="100" value="50" aria-label="Масштаб">
                <button type="button" aria-label="Увеличить"><ui-icon name="plus"></ui-icon></button>
            </div>
        </div>
        `;
    }
}

class TaskBar extends HTMLElement{
    system = ["win", "search", "tasks"];
    apps = ["maxthon", "chrome", "lenovo", "home", "bag", "store", "folder", "yandex", "skype", "fire", "word"];
    running = ["chrome", "skype", "fire"];

    constructor(){
        super();
        this.attachShadow({mode: "open"});
    }

    connectedCallback(){
        const item = (name) => {
            const state = name === "word" ? "active" : this.running.includes(name) ? "run" : "";
            return `<button type="button" class="${state}" aria-label="${name}"><ui-icon name="${name}"></ui-icon></button>`;
        };

        this.shadowRoot.innerHTML = `
        <style>
        :host{ display: flex; height: 40px; background: #000; color: #fff; }
        .system, .apps, .tray{ display: flex; }
        .apps{ gap: 1px; margin-left: 2px; flex: 1; }
        button{ display: flex; align-items: center; justify-content: center; width: 48px; border: 0; padding: 0; background: none; }
        .run{ background: linear-gradient(#fdf1a5, #fdf1a5) bottom / 40px 2px no-repeat; }
        .active{ background: linear-gradient(#fdf1a5, #fdf1a5) bottom / 100% 2px no-repeat #333; }
        .tray{ align-items: center; }
        .tray button{ width: 24px; height: 40px; }
        .lang{ margin: 0 17px 0 8px; }
        .clock{ text-align: center; line-height: 17px; padding: 0 11px 2px 0; }
        .desk{ width: 4px; height: 40px; border-left: 1px solid #777; }
        </style>
        <div class="system">${this.system.map(item).join("")}</div>
        <div class="apps">${this.apps.map(item).join("")}</div>
        <div class="tray">
            <button type="button" aria-label="Скрытые значки"><ui-icon name="trayUp"></ui-icon></button>
            <button type="button" aria-label="Питание"><ui-icon name="battery"></ui-icon></button>
            <button type="button" aria-label="Звук"><ui-icon name="sound"></ui-icon></button>
            <button type="button" aria-label="Уведомления"><ui-icon name="note"></ui-icon></button>
            <span class="lang">ENG</span>
            <div class="clock">10:57<br>19.06.2016</div>
            <span class="desk"></span>
        </div>
        `;
    }
}

class WordApp extends HTMLElement{
    constructor(){
        super();
        this.attachShadow({mode: "open"}).innerHTML = `
        <style>
        :host{ display: flex; flex-direction: column; height: 100vh; background: #bfdbff; }
        </style>
        <title-bar></title-bar>
        <ribbon-tabs></ribbon-tabs>
        <word-ribbon></word-ribbon>
        <work-space></work-space>
        <status-bar></status-bar>
        <task-bar></task-bar>
        `;
    }
}

customElements.define("ui-icon", UiIcon);
customElements.define("tool-button", ToolButton);
customElements.define("tool-strip", ToolStrip);
customElements.define("small-command", SmallCommand);
customElements.define("ribbon-group", RibbonGroup);
customElements.define("style-card", StyleCard);
customElements.define("title-bar", TitleBar);
customElements.define("ribbon-tabs", RibbonTabs);
customElements.define("word-ribbon", WordRibbon);
customElements.define("doc-page", DocPage);
customElements.define("work-space", WorkSpace);
customElements.define("status-bar", StatusBar);
customElements.define("task-bar", TaskBar);
customElements.define("word-app", WordApp);
</script>
</body>
</html>
